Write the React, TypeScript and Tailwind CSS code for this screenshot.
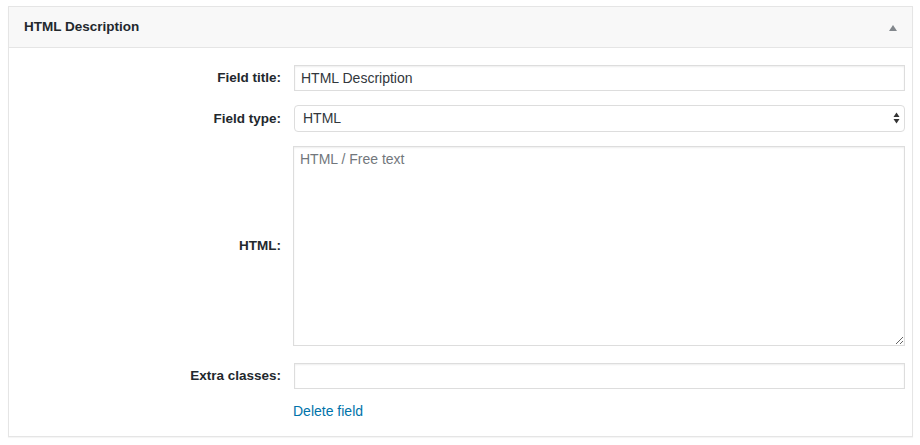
import { FC } from "react";

const inputClass =
  "h-[26px] w-full border border-[#dddddd] bg-white px-[6px] text-[14px] text-[#32373c] shadow-[inset_0_1px_2px_rgba(0,0,0,0.07)] outline-none";

const Label: FC<{ text: string; className?: string }> = ({ text, className }) => (
  <label className={`text-right text-[13.5px] font-bold text-[#23282d] ${className ?? ""}`}>
    {text}
  </label>
);

const App: FC = () => {
  return (
    <div
      className="min-h-[445px] bg-white pl-[8px] pt-[6px]"
      style={{ fontFamily: '"Liberation Sans", Arial, sans-serif' }}
    >
      <div className="h-[431px] w-[905px] border border-[#e5e5e5] bg-white shadow-[0_1px_1px_rgba(0,0,0,0.04)]">
        <div className="flex h-[41px] items-center justify-between border-b border-[#e5e5e5] bg-[#f8f8f8] pl-[15px] pr-[14px]">
          <h2 className="text-[13.5px] font-bold text-[#23282d]">HTML Description</h2>
          <svg width="10" height="8" viewBox="0 0 10 8" className="mt-[1px]">
            <path d="M5 1 L9 7 L1 7 Z" fill="#82878c" />
          </svg>
        </div>

        <div className="grid grid-cols-[272px_611px] gap-x-[13px] pt-[17px]">
          <Label text="Field title:" className="leading-[26px]" />
          <input className={inputClass} defaultValue="HTML Description" />

          <Label text="Field type:" className="mt-[14px] leading-[27px]" />
          <div className="relative mt-[14px]">
            <div className="flex h-[27px] w-full items-center rounded-[4px] border border-[#dddddd] bg-white pl-[8px] text-[14px] text-[#32373c]">
              HTML
            </div>
            <svg
              width="7"
              height="12"
              viewBox="0 0 7 12"
              className="absolute right-[5px] top-[7px]"
            >
              <path d="M3.5 0.5 L6.5 5 L0.5 5 Z" fill="#333" />
              <path d="M3.5 11.5 L6.5 7 L0.5 7 Z" fill="#333" />
            </svg>
          </div>

          <Label text="HTML:" className="mt-[14px] flex items-center justify-end" />
          <textarea
            className="mt-[14px] h-[200px] w-[612px] -ml-[1px] border border-[#dddddd] bg-white px-[6px] py-[2px] text-[14px] text-[#32373c] shadow-[inset_0_1px_2px_rgba(0,0,0,0.07)] outline-none placeholder:text-[#72777c]"
            placeholder="HTML / Free text"
          />

          <Label text="Extra classes:" className="mt-[17px] leading-[26px]" />
          <input className={`mt-[17px] ${inputClass}`} />

          <div />
          <a href="#" className="mt-[13px] -ml-[1px] text-[14px] leading-[18px] text-[#0073aa]">
            Delete field
          </a>
        </div>
      </div>
    </div>
  );
};

export default App;
